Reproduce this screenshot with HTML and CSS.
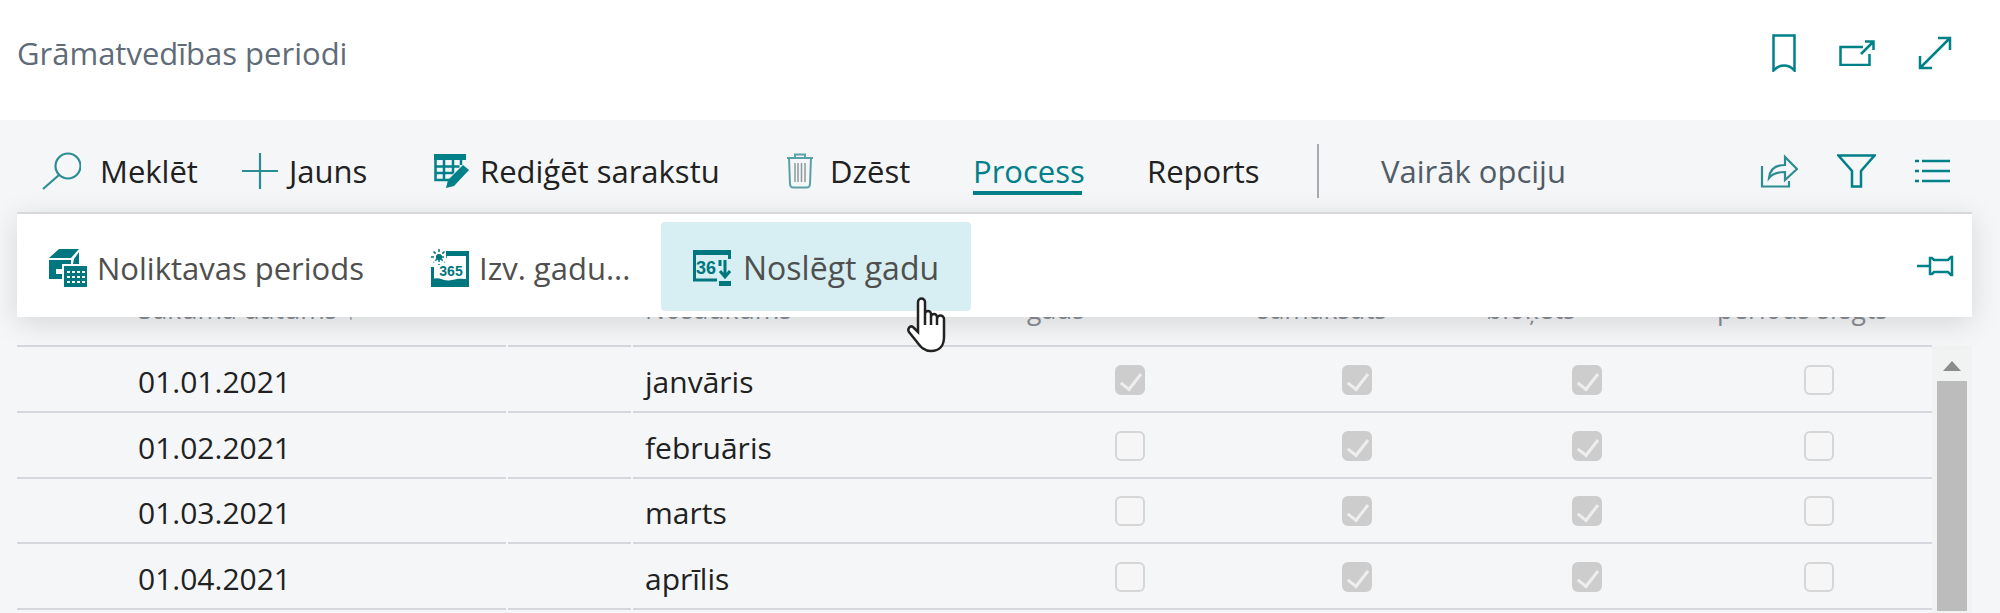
FILE: index.html
```html
<!DOCTYPE html>
<html lang="lv">
<head>
    <meta charset="UTF-8">
    <title>Grāmatvedības periodi</title>
    <link rel="stylesheet" href="styles.css">
</head>
<body>
    <header class="head">
        <div class="title">Grāmatvedības periodi</div>
        <div class="head-icons">
            <svg class="ico" width="24" height="38" viewBox="0 0 24 38"><path d="M1.500 1.500h21v35l-1-1c-2-2-5-4-9.500-4s-7.500 2-9.500 4l-1 1z"/></svg>
            <svg class="ico" width="36" height="26" viewBox="0 0 36 26"><path d="M24 7H1.500v18h29V14"/><path d="M22 14L34 2M26 1.500h8.500V10"/></svg>
            <svg class="ico" width="34" height="34" viewBox="0 0 34 34"><path d="M2 32L32 2M20 2h12v12M2 20v12h12"/></svg>
        </div>
    </header>

    <main class="page">
        <nav class="toolbar">
            <div class="tb-item tb-search">
                <svg class="ico ico-thin" width="40" height="40" viewBox="0 0 40 40"><circle cx="27" cy="15" r="12.500"/><path d="M18 24L2 38"/></svg>
                <span>Meklēt</span>
            </div>
            <div class="tb-item tb-new">
                <svg class="ico ico-thin" width="36" height="36" viewBox="0 0 36 36"><path d="M0 18h36M18 0v36"/></svg>
                <span>Jauns</span>
            </div>
            <div class="tb-item">
                <svg class="ico" width="36" height="34" viewBox="0 0 36 34"><path class="fill" d="M0 0h32v6H0z"/><path d="M1.500 6v20h17M1.500 12.500h24M1.500 19h18M10 6v20M19 6v13M27 6v5"/><path class="fill" d="M29 11l6 5-15 16-8 2 2-8z"/></svg>
                <span>Rediģēt sarakstu</span>
            </div>
            <div class="tb-item tb-del">
                <svg class="ico ico-trash" width="28" height="36" viewBox="0 0 28 36"><path d="M9 4V1.500h10V4M1 5h26M3 5l1 26c0 2 1.500 3.500 3 3.500h14c1.500 0 3-1.500 3-3.500l1-26"/><path class="bars" d="M9 10v19M12 10v19M15.500 10v19M19 10v19"/></svg>
                <span>Dzēst</span>
            </div>
            <div class="tb-item tb-tab">Process</div>
            <div class="tb-item">Reports</div>
            <div class="tb-sep"></div>
            <div class="tb-item tb-more">Vairāk opciju</div>
            <div class="tb-right">
                <svg class="ico ico-thin" width="38" height="34" viewBox="0 0 38 34"><path d="M2 12v20.500h27V27"/><path d="M9 24c1-9 7-13 16-13V3l12 12-12 11v-8c-7 0-12 1-16 6z"/></svg>
                <svg class="ico" width="39" height="34" viewBox="0 0 39 34"><path d="M1.500 1.500h36L24 17v15.500h-9V17z"/></svg>
                <svg class="ico" width="35" height="24" viewBox="0 0 35 24"><path d="M0 2h4M7 2h28M0 12h4M7 12h28M0 22h4M7 22h28"/></svg>
            </div>
        </nav>

        <div class="grid-wrap">
            <div class="grid">
                <div class="row row-head">
                    <div class="cell cell-date">Sākuma datums ↑</div>
                    <div class="cell cell-gap"></div>
                    <div class="cell cell-name">Nosaukums</div>
                    <div class="cell cell-c">gads</div>
                    <div class="cell cell-c">samaksāts</div>
                    <div class="cell cell-c">bloķēts</div>
                    <div class="cell cell-c">periods slēgts</div>
                </div>
                <div class="row">
                    <div class="cell cell-date">01.01.2021</div>
                    <div class="cell cell-gap"></div>
                    <div class="cell cell-name">janvāris</div>
                    <div class="cell cell-c"><span class="check on"></span></div>
                    <div class="cell cell-c"><span class="check on"></span></div>
                    <div class="cell cell-c"><span class="check on"></span></div>
                    <div class="cell cell-c"><span class="check"></span></div>
                </div>
                <div class="row">
                    <div class="cell cell-date">01.02.2021</div>
                    <div class="cell cell-gap"></div>
                    <div class="cell cell-name">februāris</div>
                    <div class="cell cell-c"><span class="check"></span></div>
                    <div class="cell cell-c"><span class="check on"></span></div>
                    <div class="cell cell-c"><span class="check on"></span></div>
                    <div class="cell cell-c"><span class="check"></span></div>
                </div>
                <div class="row">
                    <div class="cell cell-date">01.03.2021</div>
                    <div class="cell cell-gap"></div>
                    <div class="cell cell-name">marts</div>
                    <div class="cell cell-c"><span class="check"></span></div>
                    <div class="cell cell-c"><span class="check on"></span></div>
                    <div class="cell cell-c"><span class="check on"></span></div>
                    <div class="cell cell-c"><span class="check"></span></div>
                </div>
                <div class="row">
                    <div class="cell cell-date">01.04.2021</div>
                    <div class="cell cell-gap"></div>
                    <div class="cell cell-name">aprīlis</div>
                    <div class="cell cell-c"><span class="check"></span></div>
                    <div class="cell cell-c"><span class="check on"></span></div>
                    <div class="cell cell-c"><span class="check on"></span></div>
                    <div class="cell cell-c"><span class="check"></span></div>
                </div>
            </div>
            <div class="scrollbar">
                <div class="scroll-up"></div>
                <div class="scroll-thumb"></div>
            </div>
        </div>

        <!-- process menu, opens over the grid header -->
        <div class="menu">
            <div class="menu-btn">
                <svg class="ico-solid" width="38" height="38" viewBox="0 0 38 38"><path d="M0 9L10 0H30L22 9z"/><path d="M25 10L30 3V15H24z"/><path d="M0 11H22V15H13V20H7V25H13V30H0z"/><path d="M15 17H38V38H15z"/><path class="dots" d="M18 23H36M18 28H36M18 33H36"/></svg>
                <span>Noliktavas periods</span>
            </div>
            <div class="menu-btn menu-btn-izv">
                <svg class="ico-solid" width="38" height="38" viewBox="0 0 38 38"><circle cx="8" cy="8" r="3"/><path class="rays" d="M8 0v16M0 8h16M2.500 2.500l11 11M13.500 2.500l-11 11"/><path d="M15 2H38V7H15z"/><path class="thin" d="M36.500 7V36.500H1.500V18"/><path d="M1 30c8-3 12 3 20 1s10-1 16-1v8H1z"/><text x="20" y="27" class="ico-num" text-anchor="middle">365</text></svg>
                <span>Izv. gadu...</span>
            </div>
            <div class="menu-btn menu-btn-hover">
                <svg class="ico-solid" width="38" height="36" viewBox="0 0 38 36"><path d="M0 0h38v5H0z"/><path class="thin" d="M1.500 5v25H24M36.500 5v4"/><path d="M26 31h12v5H26z"/><text x="13" y="24" class="ico-num ico-num-big" text-anchor="middle">36</text><path class="thin" d="M27 10v6M32 10v16M27 21l5 6 5-6"/></svg>
                <span>Noslēgt gadu</span>
            </div>
            <svg class="ico ico-pin" width="37" height="22" viewBox="0 0 37 22"><path d="M0 11h13M13 3v16h2l2-2h14l3 3h1V2h-1l-3 3H17l-2-2z"/></svg>
        </div>

        <svg class="hand" width="41" height="56" viewBox="0 0 41 56"><path d="M11 5a3.500 3.500 0 0 1 7 0V17a3 3 0 0 1 6 0V20a3 3 0 0 1 6 0V22a3.500 3.500 0 0 1 7 0V40C37 48 33 54 24 54 17 54 14 50 10 45L2 35C0 32 3 28 6 30L11 35z"/><path d="M18 17v11M24 20v8M30 22v6"/></svg>
    </main>
</body>
</html>
```

FILE: styles.css
```css
* {
    box-sizing: border-box;
}

html, body {
    height: 613px;
    overflow: hidden;
}

body {
    font-family: "Open Sans", "Liberation Sans", sans-serif;
    margin: 0;
    background-color: #fff;
    color: #212121;
}

.ico {
    display: block;
    flex: none;
    fill: none;
    stroke: #008089;
    stroke-width: 2.500;
}

.ico-thin {
    stroke: #2b8c92;
    stroke-width: 2.200;
}

.ico .fill {
    fill: #008089;
    stroke: none;
}

.ico-solid {
    display: block;
    flex: none;
    fill: #00767f;
}

.ico-solid .thin {
    fill: none;
    stroke: #00767f;
    stroke-width: 3;
}

.ico-solid .rays {
    fill: none;
    stroke: #00767f;
    stroke-width: 1.500;
    stroke-dasharray: 3 2;
}

.ico-solid .dots {
    fill: none;
    stroke: #fff;
    stroke-width: 2;
    stroke-dasharray: 3 2;
}

.ico-num {
    font-family: "Liberation Sans", sans-serif;
    font-size: 14px;
    font-weight: 700;
    fill: #00767f;
}

.ico-num-big {
    font-size: 18px;
}

/* page header */
.head {
    height: 120px;
    display: flex;
    align-items: center;
    justify-content: space-between;
    padding: 0 48px 14px 17px;
}

.title {
    font-size: 31px;
    color: #5f6b78;
}

.head-icons {
    display: flex;
    align-items: center;
    gap: 43px;
}

/* grey part */
.page {
    position: relative;
    height: 493px;
    background-color: #f5f6f8;
}

.toolbar {
    height: 92px;
    padding: 10px 50px 0 41px;
    display: grid;
    grid-template-columns: 201px 192px 352px 187px 174px 170px 64px 1fr auto;
    align-items: center;
    font-size: 31px;
}

.tb-item {
    display: flex;
    align-items: center;
    gap: 10px;
    white-space: nowrap;
}

.tb-search {
    gap: 19px;
}

.tb-new {
    gap: 11px;
}

.tb-del {
    gap: 16px;
}

.tb-tab {
    position: relative;
    color: #00808a;
}

.tb-tab::after {
    content: "";
    position: absolute;
    left: 0;
    width: 109px;
    bottom: -3px;
    height: 4px;
    background-color: #008089;
}

.tb-sep {
    width: 2px;
    height: 54px;
    background-color: #a9acaf;
}

.tb-more {
    color: #505c66;
}

.tb-right {
    display: flex;
    align-items: center;
    gap: 39px;
}

.ico-trash {
    stroke: #5aa0a6;
    stroke-width: 2;
}

.ico-trash .bars {
    stroke: #8d9a9c;
    stroke-width: 1.500;
}

/* grid */
.grid-wrap {
    display: flex;
    padding-left: 17px;
}

.grid {
    width: 1915px;
}

.row {
    display: grid;
    grid-template-columns: 489px 127px 382px 230px 224px 236px 227px;
    height: 65.750px;
    font-size: 30px;
}

.cell {
    display: flex;
    align-items: center;
    padding-top: 5px;
    border-bottom: 2px solid #d5d7dd;
    white-space: nowrap;
}

.cell-date {
    padding-left: 121px;
}

.cell-gap {
    margin: 0 2px;
}

.cell-name {
    padding-left: 12px;
}

.cell-c {
    justify-content: center;
    padding-top: 2px;
}

.row-head {
    height: 135px;
    font-size: 26.500px;
    color: #8a8e94;
}

.row-head .cell {
    align-items: flex-end;
    padding-top: 0;
    padding-bottom: 18px;
}

.row-head .cell-c {
    justify-content: flex-start;
    padding-left: 12px;
}

.row-head .cell-c:nth-child(6) {
    padding-left: 17px;
}

.check {
    display: block;
    position: relative;
    width: 30px;
    height: 30px;
    border: 2px solid #d6d6d6;
    border-radius: 6px;
    background-color: #f6f6f6;
}

.check.on {
    border-color: #cdcdcd;
    background-color: #cdcdcd;
}

.check.on::after {
    content: "";
    position: absolute;
    left: 8px;
    top: 2px;
    width: 9px;
    height: 18px;
    border: solid #eee;
    border-width: 0 3px 3px 0;
    transform: rotate(38deg);
}

.scrollbar {
    width: 40px;
    height: 267px;
    margin-top: 134px;
    padding: 0 5px;
    background-color: #f1f2f2;
}

.scroll-up {
    width: 0;
    height: 0;
    margin: 15px auto 10px;
    border-style: solid;
    border-width: 0 9px 10px 9px;
    border-color: transparent transparent #8c8c8c transparent;
}

.scroll-thumb {
    height: 230px;
    margin-top: 5px;
    background-color: #bcbcbc;
}

/* menu over the grid */
.menu {
    position: absolute;
    top: 92px;
    left: 17px;
    width: 1955px;
    height: 105px;
    padding-top: 8px;
    display: grid;
    grid-template-columns: 380px 264px 310px 1fr;
    background-color: #fff;
    border-top: 2px solid #d8d8dc;
    box-shadow: 0 6px 28px rgba(0, 0, 0, 0.13);
    font-size: 31px;
    color: #4f4f4f;
}

.menu-btn {
    height: 89px;
    display: flex;
    align-items: center;
    gap: 10px;
    padding: 2px 0 0 32px;
    white-space: nowrap;
}

.menu-btn-izv {
    padding-left: 34px;
}

.menu-btn-hover {
    background-color: #d7eff2;
    border-radius: 4px;
    gap: 12px;
    font-size: 32px;
}

.ico-pin {
    justify-self: end;
    align-self: center;
    margin: 0 18px 8px 0;
}

.hand {
    position: absolute;
    left: 907px;
    top: 177px;
    fill: #fff;
    stroke: #222;
    stroke-width: 2.500;
}
```
